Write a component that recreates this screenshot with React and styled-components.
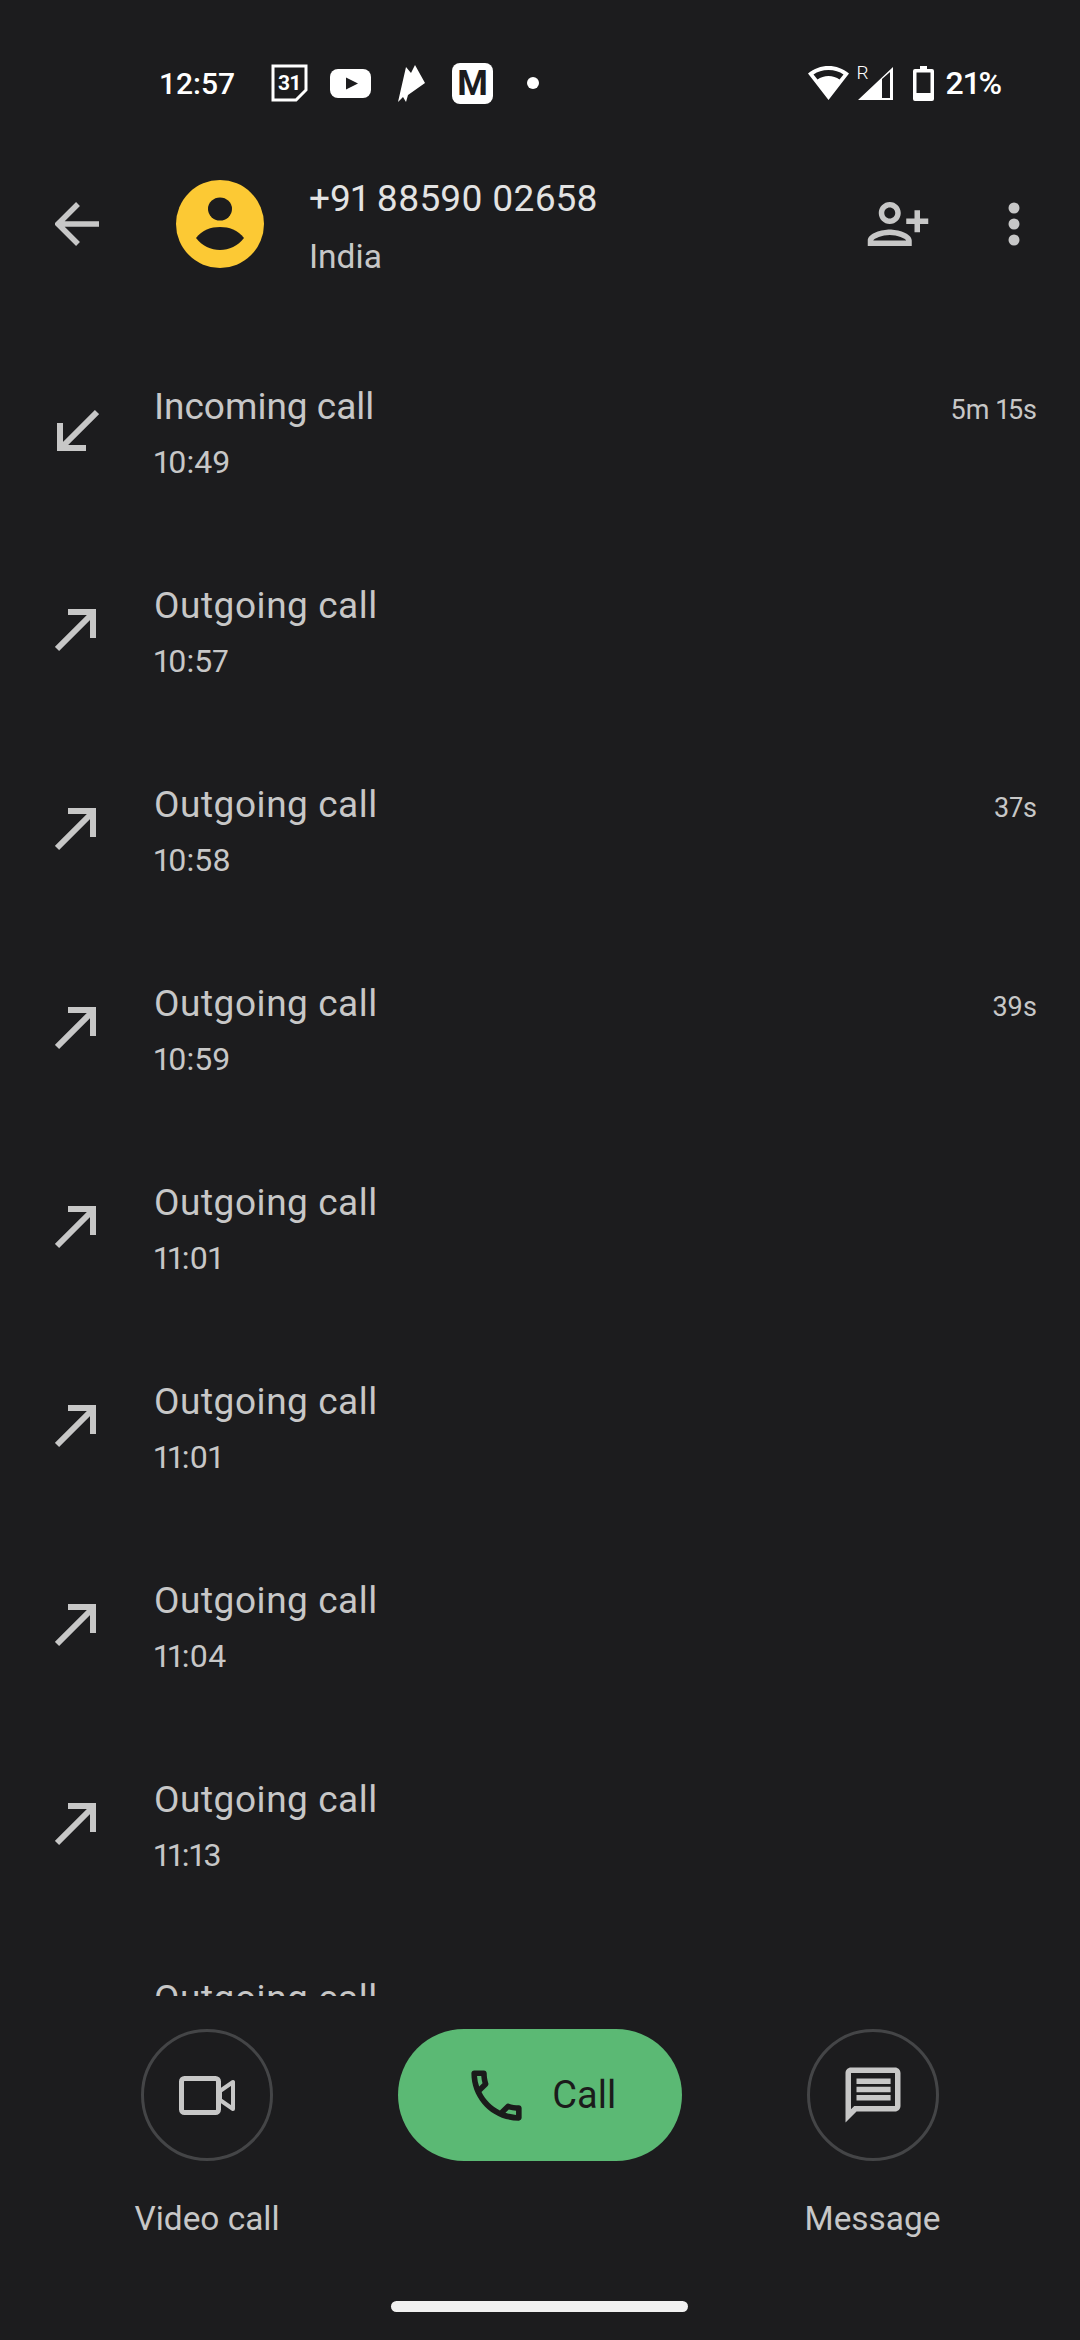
import React from "react";
import styled, { createGlobalStyle } from "styled-components";

const Global = createGlobalStyle`
  html, body { margin: 0; padding: 0; background: #1c1c1e; }
  * { box-sizing: border-box; }
`;

const Screen = styled.div`
  width: 1080px;
  height: 2340px;
  background: #1c1c1e;
  font-family: Roboto, "Noto Sans", sans-serif;
  font-variant-numeric: proportional-nums;
  display: flex;
  flex-direction: column;
  overflow: hidden;
`;

const StatusBar = styled.div`
  height: 126px;
  padding: 40px 78px 0 159px;
  display: flex;
  align-items: center;
  color: #fff;
`;
const Clock = styled.span`
  font-size: 30px;
  font-weight: 500;
  width: 112px;
  font-variant-numeric: tabular-nums;
`;
const NotifIcons = styled.div`
  display: flex;
  align-items: center;
  flex: 1;
`;
const CalendarIcon = styled.svg`
  width: 37px;
  height: 38px;
  margin-right: 22px;
`;
const YouTubeIcon = styled.svg`
  width: 41px;
  height: 29px;
  margin-right: 27px;
`;
const FeatherIcon = styled.svg`
  width: 27px;
  height: 37px;
  margin-right: 27px;
`;
const MBadge = styled.span`
  width: 41px;
  height: 41px;
  border-radius: 8px;
  background: #fff;
  color: #1c1c1e;
  font-size: 35px;
  font-weight: 700;
  line-height: 41px;
  text-align: center;
`;
const Dot = styled.span`
  width: 12px;
  height: 12px;
  border-radius: 50%;
  background: #fff;
  margin-left: 34px;
`;
const SysIcons = styled.div`
  display: flex;
  align-items: center;
`;
const SignalWrap = styled.div`
  position: relative;
  width: 35px;
  height: 33px;
  margin: 0 20px 0 9px;
`;
const Roam = styled.span`
  position: absolute;
  left: -1px;
  top: -5px;
  font-size: 19px;
  font-weight: 300;
  line-height: 22px;
  color: #fff;
`;
const Pct = styled.span`
  font-size: 32px;
  font-weight: 500;
  margin-left: 12px;
`;

const Header = styled.div`
  height: 196px;
  display: flex;
  align-items: center;
  padding: 0 0 0 55px;
`;
const BackIcon = styled.svg`
  width: 44px;
  height: 44px;
  margin-right: 77px;
  flex: none;
`;
const Avatar = styled.svg`
  width: 88px;
  height: 88px;
  flex: none;
  margin-right: 45px;
`;
const Titles = styled.div`
  flex: 1;
  display: flex;
  flex-direction: column;
  gap: 14px;
  padding-top: 3px;
`;
const Phone = styled.div`
  font-size: 37px;
  line-height: 48px;
  color: #e3e3e3;
`;
const Region = styled.div`
  font-size: 33.5px;
  line-height: 40px;
  color: #c7c7c7;
`;
const AddIcon = styled.svg`
  width: 66px;
  height: 66px;
  margin-right: 77px;
  flex: none;
`;
const MoreIcon = styled.svg`
  width: 12px;
  height: 44px;
  margin-right: 60px;
  flex: none;
`;

const List = styled.div`
  height: 1674px;
  padding-top: 12px;
  overflow: hidden;
  flex: none;
`;
const Row = styled.div`
  height: 199px;
  display: flex;
  align-items: center;
  padding: 0 43px 0 55px;
`;
const ArrowIcon = styled.svg`
  width: 44px;
  height: 44px;
  margin: 0 55px 6px 0;
  flex: none;
`;
const RowText = styled.div`
  flex: 1;
  display: flex;
  flex-direction: column;
  gap: 8px;
`;
const RowTitle = styled.div`
  font-size: 37px;
  line-height: 48px;
  color: #c7c7c7;
  letter-spacing: ${(p) => (p.$outgoing ? "0.55px" : "0")};
`;
const RowTime = styled.div`
  font-size: 32px;
  line-height: 46px;
  color: #c7c7c7;
`;
const Duration = styled.div`
  font-size: 27px;
  line-height: 36px;
  color: #c7c7c7;
  align-self: flex-start;
  margin-top: 58px;
`;

const Actions = styled.div`
  flex: 1;
  position: relative;
  display: grid;
  grid-template-columns: 132px 283.5px 132px;
  column-gap: 125px;
  justify-content: start;
  padding: 33px 0 0 141px;
  align-content: start;
  row-gap: 38px;
`;
const Round = styled.div`
  width: 132px;
  height: 132px;
  border-radius: 50%;
  border: 3px solid #444547;
  display: flex;
  align-items: center;
  justify-content: center;
`;
const CallPill = styled.div`
  height: 132px;
  border-radius: 66px;
  background: #5bb974;
  display: flex;
  align-items: center;
  justify-content: center;
  gap: 22px;
  color: #1b1b1b;
  font-size: 38px;
`;
const ActionLabel = styled.div`
  font-size: 33.4px;
  line-height: 40px;
  color: #c7c7c7;
  text-align: center;
  white-space: nowrap;
  margin: 0 -40px;
`;
const HomeBar = styled.div`
  position: absolute;
  left: 391px;
  top: 305px;
  width: 297px;
  height: 11px;
  border-radius: 6px;
  background: #f1f1f1;
`;

const In = () => (
  <ArrowIcon viewBox="0 0 44 44" fill="none" stroke="#c7c7c7" strokeWidth="6">
    <path d="M42 3 6 39M5 14v25h26" />
  </ArrowIcon>
);
const Out = () => (
  <ArrowIcon viewBox="0 0 44 44" fill="none" stroke="#c7c7c7" strokeWidth="6">
    <path d="M2 41 38 5M13 4h25v26" />
  </ArrowIcon>
);

const rows = [
  ["Incoming call", "10:49", "5m 15s"],
  ["Outgoing call", "10:57"],
  ["Outgoing call", "10:58", "37s"],
  ["Outgoing call", "10:59", "39s"],
  ["Outgoing call", "11:01"],
  ["Outgoing call", "11:01"],
  ["Outgoing call", "11:04"],
  ["Outgoing call", "11:13"],
  ["Outgoing call", "11:20"],
];

export default function App() {
  return (
    <Screen>
      <Global />
      <StatusBar>
        <Clock>12:57</Clock>
        <NotifIcons>
          <CalendarIcon viewBox="0 0 37 38">
            <path d="M2 2h33v24L25 36H2z" fill="none" stroke="#fff" strokeWidth="3" />
            <text x="7" y="26" fontFamily="Roboto" fontWeight="700" fontSize="21" fill="#fff">31</text>
          </CalendarIcon>
          <YouTubeIcon viewBox="0 0 41 29">
            <rect width="41" height="29" rx="8" fill="#fff" />
            <path d="M16 8.500 28 14.500 16 20.500z" fill="#1c1c1e" />
          </YouTubeIcon>
          <FeatherIcon viewBox="0 0 27 37">
            <path d="M0 37 8 2l5 6 4-8 10 18-17 12-2 7-3-5z" fill="#fff" />
          </FeatherIcon>
          <MBadge>M</MBadge>
          <Dot />
        </NotifIcons>
        <SysIcons>
          <svg width="41" height="34" viewBox="0 0 41 34">
            <path fillRule="evenodd" d="M20.500 0C13 0 6 2.500 0 7.500L20.500 34 41 7.500C35 2.500 28 0 20.500 0zM20.500 4C26.500 4 31.500 5.700 35.500 8.500L31.500 13.500C28.500 11.500 24.500 10 20.500 10S12.500 11.500 9.500 13.500L5.500 8.500C9.500 5.700 14.500 4 20.500 4z" fill="#fff" />
          </svg>
          <SignalWrap>
            <Roam>R</Roam>
            <svg width="35" height="33" viewBox="0 0 35 33">
              <path fillRule="evenodd" d="M35 0V33H0zM24 12V31H32V5z" fill="#fff" />
            </svg>
          </SignalWrap>
          <svg width="21" height="35" viewBox="0 0 21 35">
            <path fillRule="evenodd" d="M7 0h7v3h5a2 2 0 0 1 2 2v28a2 2 0 0 1-2 2H2a2 2 0 0 1-2-2V5a2 2 0 0 1 2-2h5zM3.500 6.500V27h14V6.500z" fill="#fff" />
          </svg>
          <Pct>21%</Pct>
        </SysIcons>
      </StatusBar>

      <Header>
        <BackIcon viewBox="0 0 44 44" fill="none" stroke="#c7c7c7" strokeWidth="5.5">
          <path d="M44 22H4M23 2 3 22l20 20" />
        </BackIcon>
        <Avatar viewBox="0 0 88 88">
          <circle cx="44" cy="44" r="44" fill="#fcc934" />
          <ellipse cx="44" cy="29" rx="12" ry="11.500" fill="#1c1c1e" />
          <path d="M20 58C26 50 35 47 44 47s18 3 24 11C62 66 53 70 44 70S26 66 20 58z" fill="#1c1c1e" />
        </Avatar>
        <Titles>
          <Phone>+91 88590 02658</Phone>
          <Region>India</Region>
        </Titles>
        <AddIcon viewBox="0 0 24 24" fill="#c7c7c7">
          <g transform="translate(24 0) scale(-1 1)">
            <path d="M15 12c2.210 0 4-1.790 4-4s-1.790-4-4-4-4 1.790-4 4 1.790 4 4 4zm0-6c1.100 0 2 .9 2 2s-.9 2-2 2-2-.9-2-2 .9-2 2-2zm0 8c-2.670 0-8 1.340-8 4v2h16v-2c0-2.660-5.330-4-8-4zm-6 4c.22-.72 3.310-2 6-2 2.700 0 5.800 1.290 6 2H9zm-3-3v-3h3v-2H6V7H4v3H1v2h3v3h2z" />
          </g>
        </AddIcon>
        <MoreIcon viewBox="0 0 12 44" fill="#c7c7c7">
          <circle cx="6" cy="6" r="5.500" />
          <circle cx="6" cy="22" r="5.500" />
          <circle cx="6" cy="38" r="5.500" />
        </MoreIcon>
      </Header>

      <List>
        {rows.map(([title, time, dur], i) => (
          <Row key={i}>
            {i === 0 ? <In /> : <Out />}
            <RowText>
              <RowTitle $outgoing={i > 0}>{title}</RowTitle>
              <RowTime>{time}</RowTime>
            </RowText>
            {dur && <Duration>{dur}</Duration>}
          </Row>
        ))}
      </List>

      <Actions>
        <Round>
          <svg width="56" height="39" viewBox="0 0 56 39">
            <rect x="2.500" y="2.500" width="37" height="34" rx="3" fill="none" stroke="#c7c7c7" strokeWidth="5" />
            <path d="M54 6v27L41 24v-9z" fill="none" stroke="#c7c7c7" strokeWidth="4" strokeLinejoin="round" />
          </svg>
        </Round>
        <CallPill>
          <svg width="67" height="67" viewBox="0 0 24 24" fill="#1b1b1b">
            <path d="M6.540 5c.06.89.21 1.760.45 2.590l-1.200 1.200c-.41-1.200-.67-2.470-.76-3.790h1.510m9.860 12.020c.85.24 1.720.39 2.600.45v1.490c-1.320-.09-2.590-.35-3.800-.75l1.200-1.190M7.500 3H4c-.55 0-1 .45-1 1 0 9.390 7.610 17 17 17 .55 0 1-.45 1-1v-3.490c0-.55-.45-1-1-1-1.240 0-2.450-.2-3.570-.57-.1-.04-.21-.05-.31-.05-.26 0-.51.1-.71.29l-2.200 2.200c-2.830-1.450-5.150-3.760-6.590-6.590l2.200-2.200c.28-.28.36-.67.25-1.020C8.700 6.450 8.500 5.250 8.500 4c0-.55-.45-1-1-1z" />
          </svg>
          Call
        </CallPill>
        <Round>
          <svg width="66" height="66" viewBox="0 0 24 24" fill="#c7c7c7">
            <path d="M20 2H4c-1.100 0-2 .9-2 2v18l4-4h14c1.100 0 2-.9 2-2V4c0-1.100-.9-2-2-2zm0 14H5.170L4 17.170V4h16v12z" />
            <path d="M6 6h12.400v2H6zM6 9h12.400v2H6zM6 12h12.400v2H6z" />
          </svg>
        </Round>
        <ActionLabel>Video call</ActionLabel>
        <span />
        <ActionLabel>Message</ActionLabel>
        <HomeBar />
      </Actions>
    </Screen>
  );
}
